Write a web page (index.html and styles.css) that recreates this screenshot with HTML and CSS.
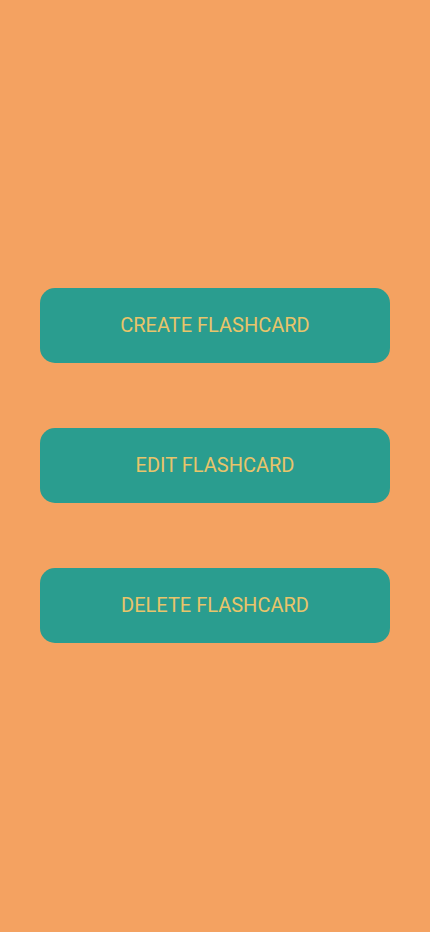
FILE: index.html
```html
<!DOCTYPE html>
<html>
<head>
<meta charset="utf-8">
<link rel="stylesheet" href="styles.css">
</head>
<body>
<main class="menu">
  <button class="btn">CREATE FLASHCARD</button>
  <button class="btn">EDIT FLASHCARD</button>
  <button class="btn">DELETE FLASHCARD</button>
</main>
</body>
</html>
```
FILE: styles.css
```css
html, body {
  margin: 0;
  padding: 0;
  height: 100%;
  background: #F4A261;
}
.menu {
  height: 932px;
  box-sizing: border-box;
  padding-bottom: 2px;
  display: flex;
  flex-direction: column;
  justify-content: center;
  align-items: center;
  gap: 65px;
}
.btn {
  width: 350px;
  height: 75px;
  border: none;
  border-radius: 15px;
  background: #2A9D8F;
  color: #E9C46A;
  font-family: Roboto, "Noto Sans", sans-serif;
  font-size: 20px;
  padding: 0;
}
```
